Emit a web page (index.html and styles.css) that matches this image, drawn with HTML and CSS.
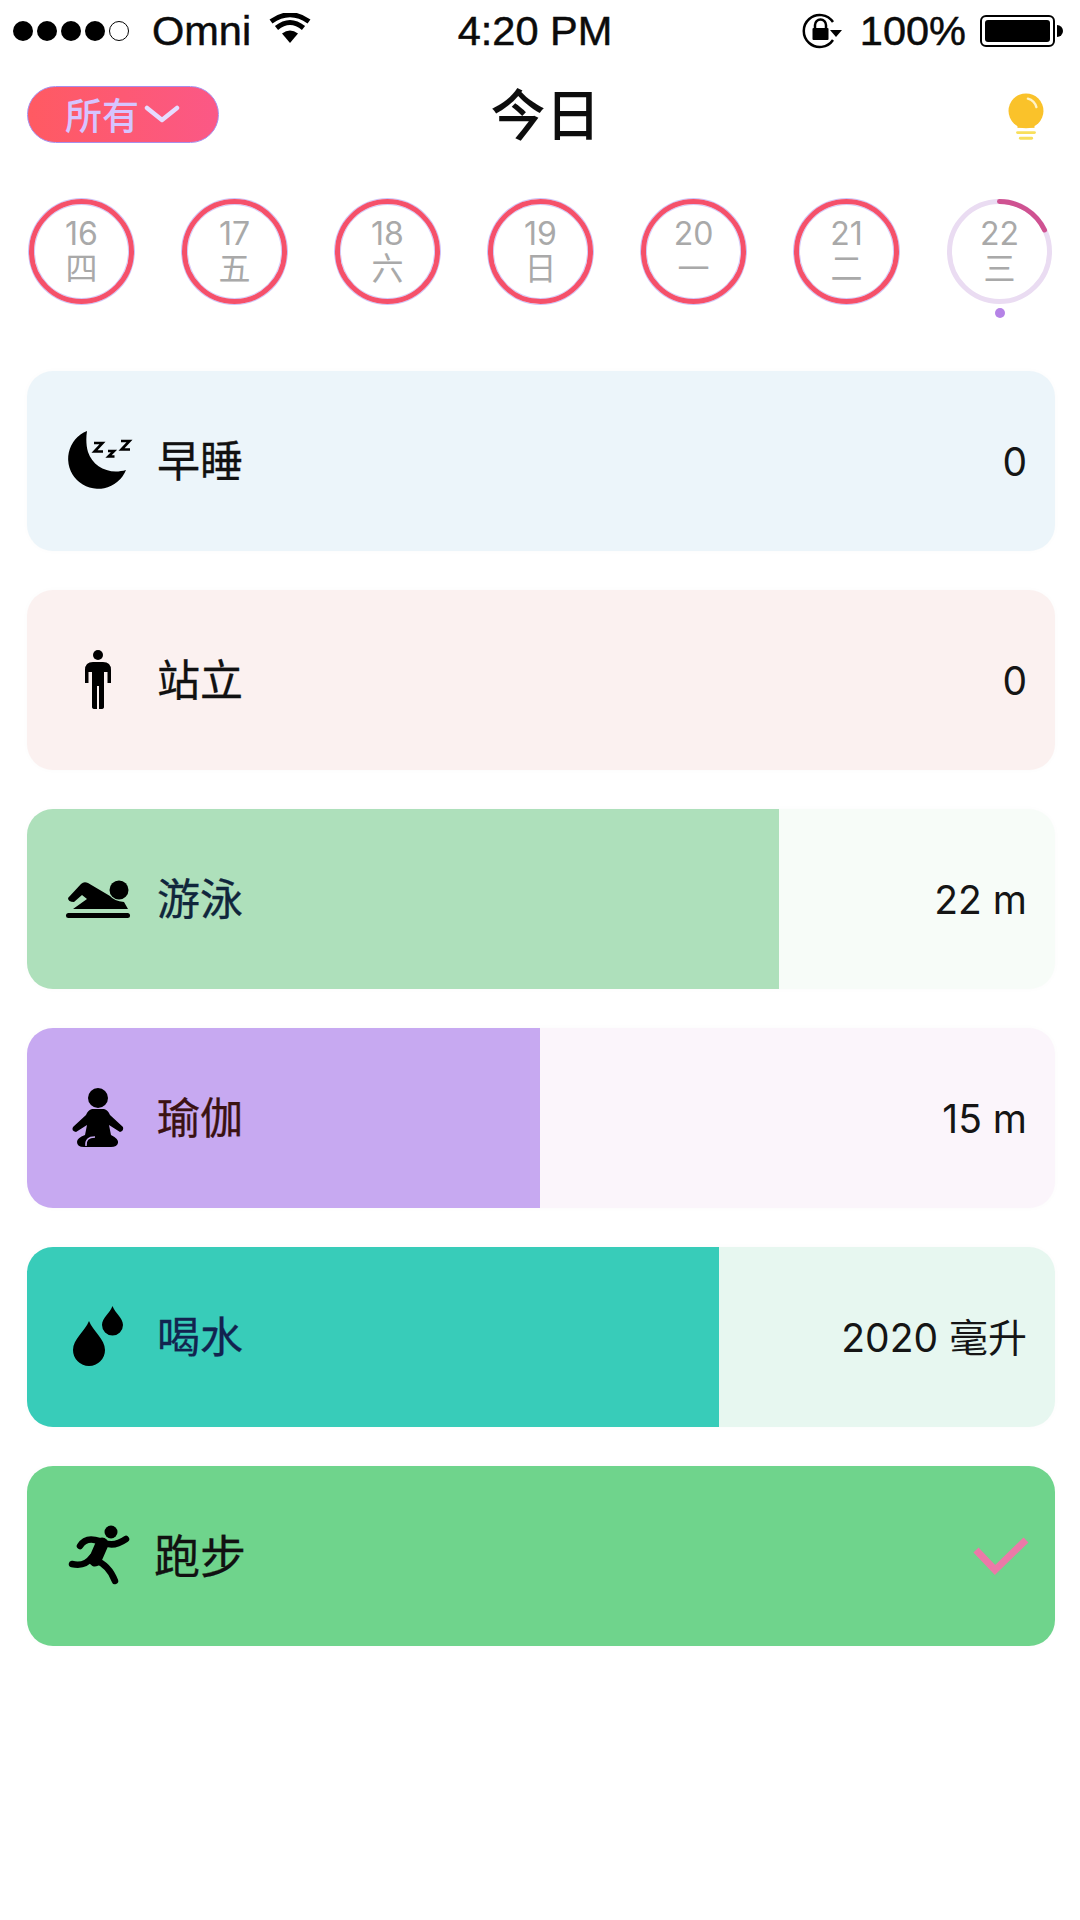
FILE: index.html
```html
<!DOCTYPE html>
<html lang="zh">
<head>
<meta charset="utf-8">
<title>今日</title>
<link rel="stylesheet" href="styles.css">
</head>
<body>
<div class="status">
  <div class="status-left">
    <div class="signal"><i></i><i></i><i></i><i></i><i class="off"></i></div>
    <span class="carrier">Omni</span>
    <svg class="wifi" viewBox="0 0 42 30"><path d="M21 30 L13 20.500 Q21 14.500 29 20.500Z"/><path d="M7.500 15 Q21 4 34.500 15" class="arc"/><path d="M2 8.500 Q21 -5 40 8.500" class="arc"/></svg>
  </div>
  <div class="time">4:20 PM</div>
  <div class="status-right">
    <svg class="rotlock" viewBox="0 0 42 36"><path d="M31 27 A16 16 0 1 1 31 9" class="ring-line"/><path d="M28 17 H40 L34 24Z"/><path d="M13 15 V12 A5.500 5.500 0 0 1 24 12 V15" class="shackle"/><rect x="10.500" y="15" width="16" height="12" rx="1"/></svg>
    <span class="pct">100%</span>
    <div class="battery"><div class="battery-level"></div></div>
    <div class="battery-nub"></div>
  </div>
</div>

<header class="top">
  <div class="top-left">
    <button class="pill">所有<svg class="chev" viewBox="0 0 36 18"><path d="M3 3 L18 15 L33 3"/></svg></button>
  </div>
  <h1 class="title">今日</h1>
  <div class="top-right">
    <svg class="bulb" viewBox="0 0 40 54"><circle cx="20" cy="20" r="18.500" fill="#fac22a"/><path d="M11 36 H29 V38 H11Z" fill="#fac22a"/><path d="M22 7 Q29 9 31 16" class="shine"/><path d="M11 43 H29" class="base"/><path d="M14 49 H26" class="base"/></svg>
  </div>
</header>

<section class="days">
  <div class="day"><div class="ring done"><b>16</b><span>四</span></div></div>
  <div class="day"><div class="ring done"><b>17</b><span>五</span></div></div>
  <div class="day"><div class="ring done"><b>18</b><span>六</span></div></div>
  <div class="day"><div class="ring done"><b>19</b><span>日</span></div></div>
  <div class="day"><div class="ring done"><b>20</b><span>一</span></div></div>
  <div class="day"><div class="ring done"><b>21</b><span>二</span></div></div>
  <div class="day today">
    <div class="ring current"><b>22</b><span>三</span>
      <svg class="arc-progress" viewBox="0 0 105 105"><path d="M52.500 2.500 A50 50 0 0 1 97.500 31"/></svg>
    </div>
    <div class="today-dot"></div>
  </div>
</section>

<main class="cards">
  <div class="card sleep">
    <svg class="icon" viewBox="0 0 80 80"><path d="M30 11 A30 30 0 1 0 69 50 C52 55 36 47 31 32 C29 25 29 18 30 11Z"/><path class="zz" d="M37 23 H45.500 L37.500 31.500 H46"/><path class="zz" d="M51 31 H57 L51.500 36.500 H57.500"/><path class="zz" d="M64 21 H72.500 L64.500 29.500 H73"/></svg>
    <span class="label">早睡</span><span class="value">0</span>
  </div>
  <div class="card stand">
    <svg class="icon" viewBox="0 0 80 80"><circle cx="41" cy="16" r="5"/><path d="M36 23 H46 Q54 23 54 31 V44 H50.500 V33 H47 V68 Q47 70 44 70 H42 V47 H40 V70 H38 Q35 70 35 68 V33 H31.500 V44 H28 V31 Q28 23 36 23Z"/></svg>
    <span class="label">站立</span><span class="value">0</span>
  </div>
  <div class="card swim">
    <div class="fill" style="width:73.2%"></div>
    <svg class="icon" viewBox="0 0 80 80"><circle cx="62" cy="32" r="9.500"/><rect x="9" y="55" width="64" height="5" rx="2.500"/><path d="M11 40 L24 26 Q27 23 31 25 L53 38 Q57 43 67 44 L71 51 H16 L30 41 L25 37 L17 44 Q11 44 11 40Z"/></svg>
    <span class="label ink-blue">游泳</span><span class="value">22 m</span>
  </div>
  <div class="card yoga">
    <div class="fill" style="width:49.9%"></div>
    <svg class="icon" viewBox="0 0 80 80"><circle cx="41" cy="21" r="10"/><path d="M35 32 H47 Q51 33 53 38 L66 50 Q67 54 63 55 L52 48 L54 58 Q62 62 61 66 Q60 70 54 70 H27 Q20 70 20 65 Q20 61 28 58 L30 48 L19 55 Q14 54 16 50 L29 38 Q31 33 35 32Z"/><path class="yoga-line" d="M29 69 Q28 60 38 60"/></svg>
    <span class="label ink-brown">瑜伽</span><span class="value">15 m</span>
  </div>
  <div class="card water">
    <div class="fill" style="width:67.3%"></div>
    <svg class="icon" viewBox="0 0 80 80"><path d="M32 25 C28 35 16 43 16 54 A16 16 0 0 0 48 54 C48 43 36 35 32 25Z"/><path d="M55.500 10 C53 17 45 22 45 29 A10.500 10.500 0 0 0 66 29 C66 22 58 17 55.500 10Z"/></svg>
    <span class="label ink-navy">喝水</span><span class="value">2020 毫升</span>
  </div>
  <div class="card run">
    <svg class="icon" viewBox="0 0 80 80"><circle cx="54" cy="17" r="6.500"/><path class="limb" d="M23 31 Q28 23 38 25 L46 27 Q56 33 69 24"/><path class="limb" d="M15 49 Q28 52 35 42"/><path class="limb" d="M38 45 Q52 50 58 66"/><path class="torso" d="M45 29 L38 45"/></svg>
    <span class="label label-large">跑步</span>
    <svg class="check" viewBox="0 0 56 38"><path d="M3 13 L22 33 L53 3"/></svg>
  </div>
</main>
</body>
</html>
```

FILE: styles.css
```css
* { box-sizing: border-box; }
html, body { margin: 0; padding: 0; background: #fff; }
body {
  width: 1080px;
  height: 1920px;
  overflow: hidden;
  font-family: "Liberation Sans", "Noto Sans CJK SC", sans-serif;
  color: #111;
}

/* status bar */
.status {
  display: grid;
  grid-template-columns: 1fr auto 1fr;
  align-items: center;
  height: 62px;
  padding: 0 17px 0 13px;
  font-size: 41.5px;
  color: #0b0b0b;
  -webkit-text-stroke: .5px #0b0b0b;
}
.status-left, .status-right { display: flex; align-items: center; }
.status-right { justify-content: flex-end; }
.signal { display: flex; gap: 4px; margin-right: 23px; }
.signal i { display: block; width: 20px; height: 20px; border-radius: 50%; background: #000; }
.signal i.off { background: #fff; border: 1.5px solid #000; }
.wifi { width: 42px; height: 30px; margin-left: 18px; margin-top: -6px; }
.wifi .arc { fill: none; stroke: #000; stroke-width: 5px; }
.time { margin-left: -6px; }
.rotlock { width: 42px; height: 36px; margin-right: 16px; }
.rotlock .ring-line { fill: none; stroke: #000; stroke-width: 2.5px; }
.rotlock .shackle { fill: none; stroke: #000; stroke-width: 2.5px; }
.pct { margin-right: 14px; }
.battery {
  width: 75px;
  height: 32px;
  padding: 3px;
  border: 2px solid #000;
  border-radius: 6px;
}
.battery-level { height: 100%; background: #000; border-radius: 3px; }
.battery-nub { width: 6px; height: 12px; margin-left: 2px; background: #000; border-radius: 0 6px 6px 0; }

/* header */
.top {
  display: grid;
  grid-template-columns: 1fr auto 1fr;
  align-items: center;
  height: 58px;
  margin-top: 20px;
  padding: 0 25px 0 27px;
}
.pill {
  display: flex;
  align-items: center;
  width: 192px;
  height: 57px;
  padding: 0 0 0 37px;
  border: 1.5px solid #a78fec;
  border-radius: 29px;
  background: linear-gradient(90deg, #ff5a62, #fb5886);
  color: #d6c4ff;
  font-family: "Noto Sans CJK SC", sans-serif;
  font-size: 37px;
  font-weight: 500;
  line-height: 1;
}
.chev { width: 36px; height: 18px; margin-left: 5px; }
.chev path { fill: none; stroke: #e6dcff; stroke-width: 4.5px; stroke-linecap: round; stroke-linejoin: round; }
.title {
  margin: 0 0 6px 9px;
  font-family: "Noto Sans CJK SC", sans-serif;
  font-size: 55px;
  font-weight: 500;
  line-height: 58px;
  color: #0d0d0d;
}
.top-right { display: flex; justify-content: flex-end; padding: 7px 10px 0 0; }
.bulb { width: 38px; height: 51px; }
.bulb .shine { fill: none; stroke: #fff3c8; stroke-width: 2.5px; stroke-linecap: round; }
.bulb .base { fill: none; stroke: #f8df5c; stroke-width: 3px; stroke-linecap: round; }

/* day rings */
.days {
  display: flex;
  justify-content: space-between;
  height: 172px;
  margin-top: 59px;
  padding: 0 28px 0 29px;
}
.day { display: flex; flex-direction: column; align-items: center; width: 105px; }
.ring {
  position: relative;
  display: flex;
  flex-direction: column;
  align-items: center;
  justify-content: center;
  width: 105px;
  height: 105px;
  padding-bottom: 4px;
  border-radius: 50%;
  color: #a9a9a9;
}
.ring.done { border: 5px solid #f5506a; box-shadow: 0 0 0 1px rgba(128, 105, 240, .4), inset 0 0 0 1px rgba(128, 105, 240, .35); }
.ring.current { border: 5px solid #eadcf2; }
.ring b { font-family: "Inter", sans-serif; font-size: 32px; font-weight: 400; line-height: 33px; }
.ring span { font-family: "Noto Sans CJK SC", sans-serif; font-size: 32px; line-height: 33px; }
.arc-progress { position: absolute; top: -5px; left: -5px; width: 105px; height: 105px; }
.arc-progress path { fill: none; stroke: #cf5291; stroke-width: 5px; stroke-linecap: round; }
.today-dot { width: 10px; height: 10px; margin-top: 4px; border-radius: 50%; background: #b583e6; }

/* cards */
.cards {
  display: flex;
  flex-direction: column;
  gap: 39px;
  padding: 0 25px 0 27px;
}
.card {
  position: relative;
  display: flex;
  align-items: center;
  height: 180px;
  padding: 0 28px 0 30px;
  overflow: hidden;
  border-radius: 26px;
  box-shadow: 0 0 6px rgba(0, 0, 0, .02);
}
.fill { position: absolute; top: 0; bottom: 0; left: 0; }
.icon, .label, .value, .check { position: relative; }
.icon { flex: none; width: 80px; height: 80px; margin-right: 20px; margin-bottom: 2px; fill: #000; }
.label {
  flex: 1;
  margin-bottom: 6px;
  font-family: "Noto Sans CJK SC", sans-serif;
  font-size: 43px;
  line-height: 1;
  color: #111;
  -webkit-text-stroke: .3px currentColor;
}
.label-large { font-size: 46px; margin-left: -3px; }
.value {
  font-family: "Inter", "Noto Sans CJK SC", sans-serif;
  font-size: 39px;
  line-height: 1;
  color: #151515;
}
.ink-blue { color: #10263c; }
.ink-brown { color: #3b1212; }
.ink-navy { color: #12234f; }

.sleep { background: #ecf5fa; }
.stand { background: #fbf1f0; }
.swim { background: #f7fcf8; }
.swim .fill { background: #aee0bb; }
.yoga { background: #fbf5fb; }
.yoga .fill { background: #c7a9f1; }
.water { background: #e7f7f0; }
.water .fill { background: #38ccb9; }
.run { background: #6fd48c; }

.zz { fill: none; stroke: #000; stroke-width: 2.6px; }
.yoga-line { fill: none; stroke: #c7a9f1; stroke-width: 1.5px; }
.limb { fill: none; stroke: #000; stroke-width: 6.5px; stroke-linecap: round; stroke-linejoin: round; }
.torso { fill: none; stroke: #000; stroke-width: 13px; stroke-linecap: round; }
.check { flex: none; width: 56px; height: 38px; margin-right: -2px; }
.check path { fill: none; stroke: #ec79a8; stroke-width: 7px; stroke-linecap: butt; stroke-linejoin: miter; }
```
